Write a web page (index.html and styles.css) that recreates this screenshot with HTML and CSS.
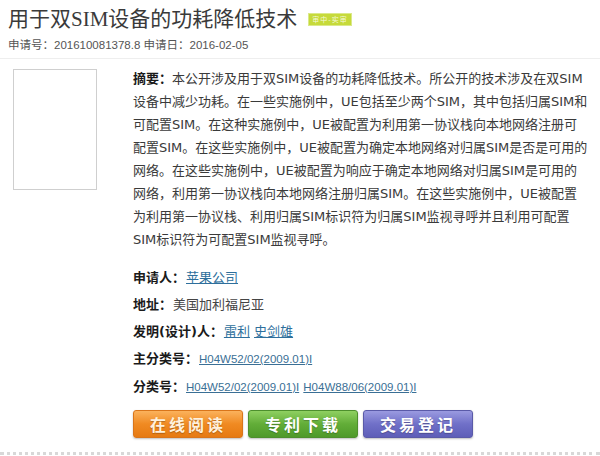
FILE: index.html
```html
<!DOCTYPE html>
<html lang="zh-CN">
<head>
    <meta charset="UTF-8">
    <title>用于双SIM设备的功耗降低技术</title>
    <link rel="stylesheet" href="styles.css">
</head>
<body>
    <div class="page">
        <h1 class="title">用于双SIM设备的功耗降低技术<span class="status">审中-实审</span></h1>
        <p class="meta">申请号：201610081378.8 申请日：2016-02-05</p>

        <div class="detail">
            <div class="thumb"></div>
            <div class="info">
                <p class="abstract"><b>摘要：</b>本公开涉及用于双SIM设备的功耗降低技术。所公开的技术涉及在双SIM<br>设备中减少功耗。在一些实施例中，UE包括至少两个SIM，其中包括归属SIM和<br>可配置SIM。在这种实施例中，UE被配置为利用第一协议栈向本地网络注册可<br>配置SIM。在这些实施例中，UE被配置为确定本地网络对归属SIM是否是可用的<br>网络。在这些实施例中，UE被配置为响应于确定本地网络对归属SIM是可用的<br>网络，利用第一协议栈向本地网络注册归属SIM。在这些实施例中，UE被配置<br>为利用第一协议栈、利用归属SIM标识符为归属SIM监视寻呼并且利用可配置<br>SIM标识符为可配置SIM监视寻呼。</p>

                <ul class="fields">
                    <li><b>申请人：</b><a href="#">苹果公司</a></li>
                    <li><b>地址：</b><span class="value">美国加利福尼亚</span></li>
                    <li><b>发明(设计)人：</b><a href="#">雷利</a> <a href="#">史剑雄</a></li>
                    <li><b>主分类号：</b><a href="#" class="code">H04W52/02(2009.01)I</a></li>
                    <li><b>分类号：</b><a href="#" class="code">H04W52/02(2009.01)I</a> <a href="#" class="code">H04W88/06(2009.01)I</a></li>
                </ul>

                <div class="actions">
                    <a href="#" class="btn btn-read">在线阅读</a>
                    <a href="#" class="btn btn-download">专利下载</a>
                    <a href="#" class="btn btn-trade">交易登记</a>
                </div>
            </div>
        </div>
        <div class="footer-line"></div>
    </div>
</body>
</html>
```

FILE: styles.css
```css
body {
    margin: 0;
    background: #fff;
    font-family: Tahoma, "DejaVu Sans", "Noto Sans CJK SC", sans-serif;
    color: #333;
}

.page {
    padding: 7px 8px 0;
}

.title {
    margin: 0;
    display: flex;
    align-items: center;
    font-family: "Liberation Serif", "Noto Sans CJK SC", serif;
    font-size: 21px;
    line-height: 24px;
    font-weight: normal;
    color: #3a3a3a;
}

.status {
    margin-left: 11px;
    padding: 0 3px;
    height: 11px;
    line-height: 11px;
    background: #c6da3a;
    border: 1px solid #dbe98a;
    color: #f4f9d8;
    font-family: "Noto Sans CJK SC", sans-serif;
    font-size: 7px;
    letter-spacing: 1px;
}

.meta {
    margin: 6px -8px 0;
    padding: 0 8px 5px;
    font-family: "Liberation Sans", "Noto Sans CJK SC", sans-serif;
    font-size: 11.5px;
    line-height: 16px;
    color: #555;
    border-bottom: 1px solid #eee;
}

.detail {
    display: flex;
    margin-top: 8px;
}

.thumb {
    width: 82px;
    height: 119px;
    margin: 2px 0 0 5px;
    border: 1px solid #cfcfcf;
    flex-shrink: 0;
}

.info {
    margin-left: 36px;
}

.abstract {
    margin: 0;
    font-size: 13px;
    line-height: 23px;
    white-space: nowrap;
    color: #3a3a3a;
}

.abstract b,
.fields b {
    color: #1a1a1a;
}

.fields {
    list-style: none;
    margin: 13px 0 0;
    padding: 0;
    font-size: 13px;
    line-height: 27px;
}

.fields b {
    margin-right: 1px;
}

.fields a {
    color: #2e6f9c;
}

.fields .code {
    font-family: "Liberation Sans", sans-serif;
    font-size: 11.5px;
    color: #3a6f95;
}

.value {
    color: #444;
}

.actions {
    display: flex;
    gap: 5px;
    margin-top: 9px;
}

.btn {
    width: 108px;
    height: 26px;
    line-height: 26px;
    text-align: center;
    border-radius: 3px;
    color: #fff;
    text-decoration: none;
    font-family: "Noto Sans CJK SC", sans-serif;
    font-size: 16px;
    font-weight: bold;
    letter-spacing: 3px;
    text-shadow: 0 1px 1px rgba(0, 0, 0, 0.25);
    box-shadow: 0 1px 2px rgba(0, 0, 0, 0.25);
}

.btn-read {
    background: linear-gradient(#fbb25c, #f08a22 50%, #e67a12);
    border: 1px solid #d9751a;
    color: #fff1dd;
}

.btn-download {
    background: linear-gradient(#8fd061, #62ad38 50%, #4f9a2a);
    border: 1px solid #4d8f2d;
}

.btn-trade {
    background: linear-gradient(#9a9ae0, #7070c8 50%, #5e5eb8);
    border: 1px solid #5a5aa8;
}

.footer-line {
    margin: 14px -8px 0;
    border-top: 3px dotted #d8d8d8;
}
```
